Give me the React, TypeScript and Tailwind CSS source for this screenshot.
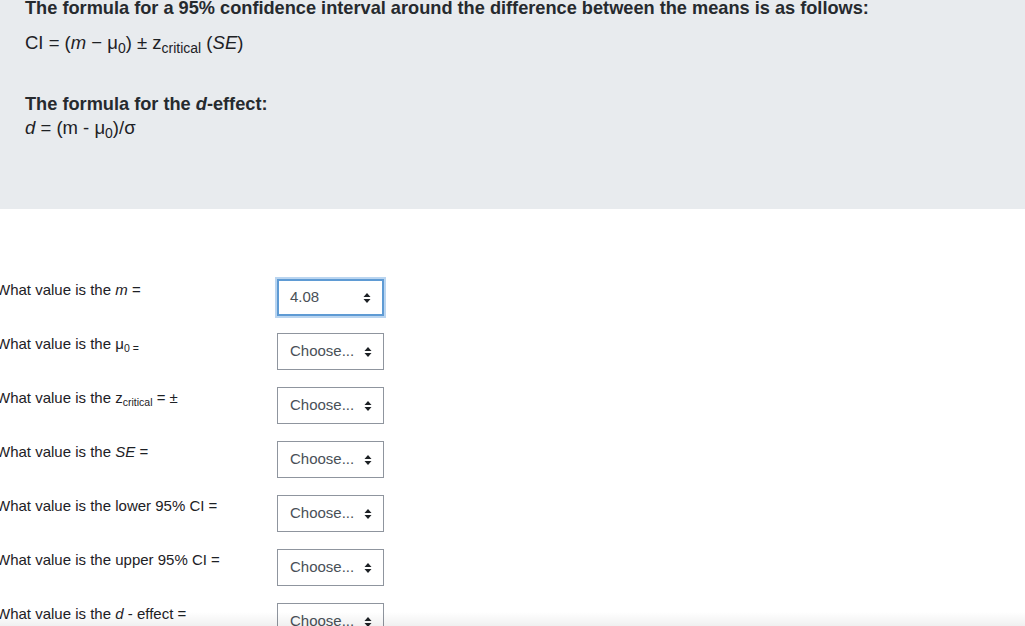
import React from 'react';

const rows: { label: React.ReactNode; value: string; focused?: boolean }[] = [
    { label: <>What value is the <i>m</i> =</>, value: '4.08', focused: true },
    { label: <>What value is the μ<sub className="text-[10.5px] align-baseline relative top-[3px]">0 =</sub></>, value: 'Choose...' },
    { label: <>What value is the z<sub className="text-[10.5px] align-baseline relative top-[3px]">critical</sub> = ±</>, value: 'Choose...' },
    { label: <>What value is the <i>SE</i> =</>, value: 'Choose...' },
    { label: <>What value is the lower 95% CI =</>, value: 'Choose...' },
    { label: <>What value is the upper 95% CI =</>, value: 'Choose...' },
    { label: <>What value is the <i>d</i> - effect =</>, value: 'Choose...' },
];

const Arrows = () => (
    <svg width="8" height="12" viewBox="0 0 8 12" className="shrink-0">
        <path d="M4 1 L7.5 5 H0.5 Z M4 11 L7.5 7 H0.5 Z" fill="#1d2125" />
    </svg>
);

const SelectBox = ({ value, focused }: { value: string; focused?: boolean }) => (
    <div
        className={`w-[107px] h-[37px] flex items-center justify-between pl-3 pr-[11px] bg-white text-[15px] text-[#495057] ${
            focused
                ? 'border-2 border-[#5f9bd4] pl-[11px] pr-[10px] shadow-[0_0_0_2px_rgba(140,185,230,0.6)]'
                : 'border border-[#8f959e]'
        }`}
    >
        <span>{value}</span>
        <Arrows />
    </div>
);

export default function App() {
    return (
        <div className="relative h-[626px] overflow-hidden bg-white text-[#1d2125]" style={{ fontFamily: '"Liberation Sans", Arial, sans-serif' }}>
            <div className="bg-[#e8ebee] h-[213px] pl-[25px] -mt-[4px] pt-0">
                <p className="text-[18.2px] font-bold leading-[24px] text-[#262a2e]">
                    The formula for a 95% confidence interval around the difference between the means is as follows:
                </p>
                <p className="text-[18.5px] leading-[24px] mt-[11px]">
                    CI = (<i>m</i> − μ<sub className="text-[14px] align-baseline relative top-[4px]">0</sub>) ± z
                    <sub className="text-[14px] align-baseline relative top-[4px]">critical</sub> (<i>SE</i>)
                </p>
                <p className="text-[18.2px] font-bold leading-[24px] mt-[37px] text-[#262a2e]">
                    The formula for the <i>d</i>-effect:
                </p>
                <p className="text-[18.5px] leading-[24px]">
                    <i>d</i> = (m - μ<sub className="text-[14px] align-baseline relative top-[4px]">0</sub>)/σ
                </p>
            </div>
            <div className="pt-[70px] flex flex-col gap-[17px]">
                {rows.map((r, i) => (
                    <div key={i} className="flex items-start">
                        <div className="w-[281px] -ml-[4px] text-[15px] leading-[20px] pt-[1px]">{r.label}</div>
                        <SelectBox value={r.value} focused={r.focused} />
                    </div>
                ))}
            </div>
            <div className="pointer-events-none absolute left-0 right-0 bottom-0 h-[14px] bg-gradient-to-b from-transparent to-black/[0.06]" />
        </div>
    );
}
